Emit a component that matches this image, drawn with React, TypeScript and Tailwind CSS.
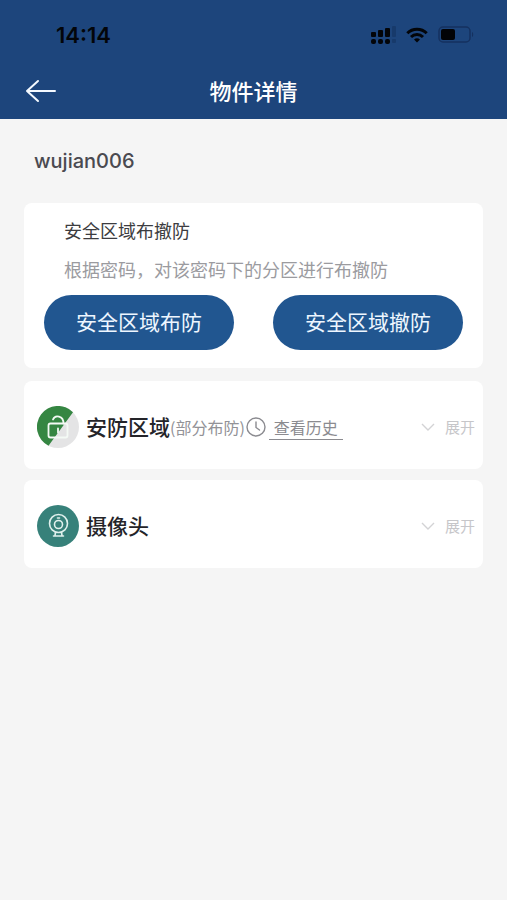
import React from "react";

interface DeviceRowProps {
  icon: React.ReactNode;
  title: string;
  className: string;
  children?: React.ReactNode;
}

const SignalIcon = () => (
  <svg className="w-[26px] h-[18px]" viewBox="0 0 26 18" fill="#030509">
    <rect x="1" y="6" width="5" height="5" rx="1" />
    <rect x="8" y="4" width="5" height="7" rx="1" />
    <rect x="15" y="2" width="5" height="9" rx="1" />
    <rect x="1" y="13" width="5" height="5" rx="2" />
    <rect x="8" y="13" width="5" height="5" rx="2" />
    <rect x="15" y="13" width="5" height="5" rx="2" />
    <g fill="#173a6b">
      <rect x="22" y="0" width="4" height="11" rx="1" />
      <rect x="22" y="13" width="4" height="4" rx="1" />
    </g>
  </svg>
);

const WifiIcon = () => (
  <svg className="w-[22px] h-[16px]" viewBox="0 0 22 16" fill="none" stroke="#030509" strokeWidth="3">
    <path d="M1.3 6.3a13.8 13.8 0 0 1 19.4 0" />
    <path d="M5 10a8.6 8.6 0 0 1 12 0" />
    <path d="M11 15.6l-3-3a4.3 4.3 0 0 1 6 0z" fill="#030509" stroke="none" />
  </svg>
);

const BatteryIcon = () => (
  <svg className="w-[36px] h-[18px]" viewBox="0 0 36 18" fill="none">
    <rect x="1" y="1" width="31" height="15" rx="4" stroke="#15315f" strokeWidth="1.5" />
    <rect x="3" y="3" width="14" height="11" rx="2" fill="#020306" />
    <path d="M34 6v5c1.6-.6 1.6-4.4 0-5z" fill="#15315f" />
  </svg>
);

const LockIcon = () => (
  <svg className="w-[42px] h-[42px] shrink-0" viewBox="0 0 42 42" fill="none">
    <circle cx="21" cy="21" r="21" fill="#e4e4e5" />
    <path d="M36 6.3A21 21 0 1 0 11.5 39.7z" fill="#358642" />
    <g stroke="#f4faf5" strokeWidth="1.8" strokeLinecap="round">
      <rect x="11.5" y="17.5" width="19" height="14" rx="2" />
      <path d="M16 13.5c2-5 10.500-4 10.5 4M21 22.500v4" />
    </g>
  </svg>
);

const CameraIcon = () => (
  <svg className="w-[42px] h-[42px] shrink-0" viewBox="0 0 42 42" fill="none">
    <circle cx="21" cy="21" r="21" fill="#37817a" />
    <g stroke="#e0f0ed" strokeWidth="1.6" strokeLinecap="round" strokeLinejoin="round">
      <circle cx="21.5" cy="18.5" r="9" />
      <circle cx="21.5" cy="19.5" r="4" />
      <path d="M20.5 13h2M18.5 27.5l-.5 3M24.5 27.5l.5 3M16.500 31h10" />
    </g>
  </svg>
);

const ClockIcon = () => (
  <svg
    className="w-5 h-5 ml-px shrink-0"
    viewBox="0 0 20 20"
    fill="none"
    stroke="#8b8b90"
    strokeWidth="1.4"
  >
    <circle cx="10" cy="10" r="9" />
    <path d="M10 5v5.5l3.500 2.500" strokeLinecap="round" />
  </svg>
);

const DeviceRow: React.FC<DeviceRowProps> = ({ icon, title, className, children }) => (
  <section
    className={`flex items-center h-[88px] pt-1 pl-[13px] pr-2 bg-white rounded-lg whitespace-nowrap ${className}`}
  >
    {icon}
    <h2 className="ml-[7px] pb-0.5 text-[21px] leading-7 font-medium text-[#242429]">{title}</h2>
    {children}
    <button type="button" className="flex items-center ml-auto text-[15px] leading-5 text-[#c6c6c9]">
      <svg className="w-4 h-4 mr-2" viewBox="0 0 16 16" fill="none" stroke="#d3d3d5" strokeWidth="1.4">
        <path d="M1 5l6 6 6-6" />
      </svg>
      展开
    </button>
  </section>
);

export default function App() {
  return (
    <div className="min-h-screen bg-[#f5f5f5] font-['Noto_Sans_CJK_SC',sans-serif]">
      <header className="bg-[#1d457c]">
        <div className="flex items-center justify-between h-16 pt-1.5 pl-14 pr-[33px] text-[#030509]">
          <time className="font-['Inter',sans-serif] text-[22px] leading-6 font-semibold">14:14</time>
          <div className="flex items-center gap-2.5">
            <SignalIcon />
            <WifiIcon />
            <BatteryIcon />
          </div>
        </div>
        <div className="grid grid-cols-[1fr_auto_1fr] items-center h-[55px] px-6">
          <button type="button" aria-label="返回" className="w-8 h-8">
            <svg
              className="w-8 h-8"
              viewBox="0 0 32 32"
              fill="none"
              stroke="#f4f9ff"
              strokeWidth="2"
              strokeLinecap="round"
              strokeLinejoin="round"
            >
              <path d="M31 15H3M14 5L3 15l11 10" />
            </svg>
          </button>
          <h1 className="pb-1 text-[22px] leading-8 font-medium text-white">物件详情</h1>
        </div>
      </header>

      <main className="px-6">
        <p className="flex items-center h-[84px] pl-2.5 font-['Inter',sans-serif] text-[20px] font-medium text-[#4a4a50]">
          wujian006
        </p>

        <section className="px-5 pt-[13px] pb-[18px] bg-white rounded-lg">
          <h2 className="pl-5 text-[18px] leading-7 text-[#3c3c40]">安全区域布撤防</h2>
          <p className="pl-5 pt-[11px] text-[18px] leading-7 text-[#9b9b9f]">根据密码，对该密码下的分区进行布撤防</p>
          <div className="flex justify-between gap-[39px] mt-3">
            <button type="button" className="flex-1 h-[55px] pb-0.5 rounded-full bg-[#215690] text-[21px] text-[#eef6ff]">
              安全区域布防
            </button>
            <button type="button" className="flex-1 h-[55px] pb-0.5 rounded-full bg-[#215690] text-[21px] text-[#eef6ff]">
              安全区域撤防
            </button>
          </div>
        </section>

        <DeviceRow icon={<LockIcon />} title="安防区域" className="mt-[13px]">
          <span className="text-[16px] leading-6 text-[#929297]">(部分布防)</span>
          <ClockIcon />
          <a
            href="#history"
            className="ml-[3px] px-[5px] border-b border-[#8b8b90] text-[16px] leading-6 text-[#8b8b90]"
          >
            查看历史
          </a>
        </DeviceRow>
        <DeviceRow icon={<CameraIcon />} title="摄像头" className="mt-[11px]" />
      </main>
    </div>
  );
}
